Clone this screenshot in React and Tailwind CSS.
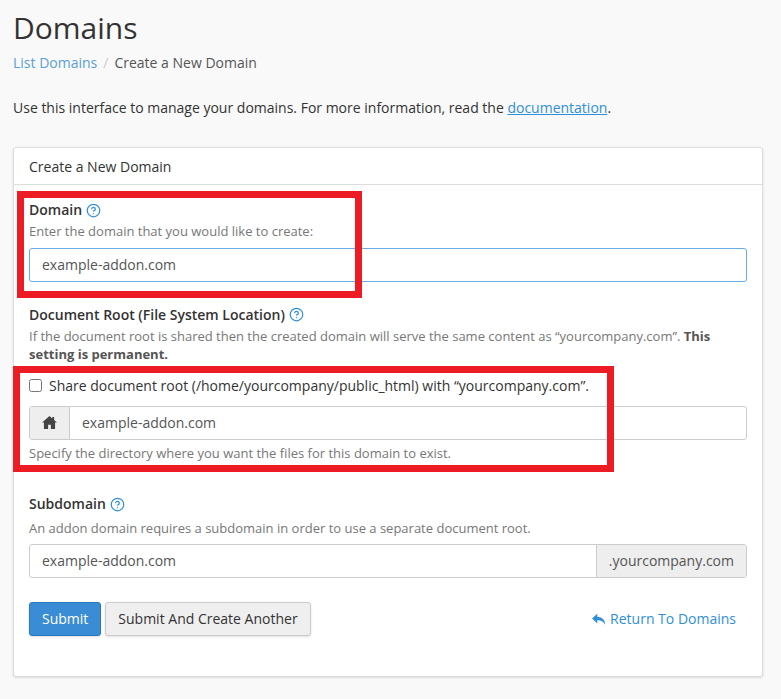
import { HelpCircle } from 'lucide-react';

const font = { fontFamily: '"Open Sans", "Liberation Sans", sans-serif' };

function Help() {
  return <HelpCircle className="inline-block w-[15px] h-[15px] text-[#2f8fd8] ml-1 -mt-0.5" strokeWidth={2} />;
}

function HomeIcon() {
  return (
    <svg viewBox="0 0 16 14" className="w-[15px] h-[13px]" fill="#444">
      <path d="M8 0 0 7h2v7h4.5V9.5h3V14H14V7h2l-3-2.6V1h-2v1.7z" />
    </svg>
  );
}

export default function App() {
  return (
    <div style={font} className="relative min-h-[699px] bg-[#f9f9f9] text-[#333] text-[14px] pl-[13px] pr-[18px] pt-[8px]">
      <h1 className="text-[30px] leading-[40px] text-[#333] font-normal">Domains</h1>
      <div className="mt-[4px] flex items-center text-[14px]">
        <span className="text-[#5a9fd6]">List Domains</span>
        <span className="text-[#ccc] mx-[6px]">/</span>
        <span className="text-[#555]">Create a New Domain</span>
      </div>
      <p className="mt-[24px] text-[14px]">
        Use this interface to manage your domains. For more information, read the{' '}
        <span className="text-[#2f8fd8] underline">documentation</span>.
      </p>
      <div className="mt-[29px] bg-white border border-[#ddd] rounded-[3px] shadow-sm">
        <div className="px-[15px] h-[37px] flex items-center border-b border-[#ddd] text-[14px]">Create a New Domain</div>
        <div className="px-[15px] pt-[14px] pb-[40px]">
          <div className="font-semibold">Domain<Help /></div>
          <div className="text-[13px] text-[#777] mt-[2px]">Enter the domain that you would like to create:</div>
          <div className="mt-[6px] h-[34px] border border-[#66afe9] rounded-[3px] flex items-center px-[12px] text-[#555]">example-addon.com</div>

          <div className="font-semibold mt-[22px]">Document Root (File System Location)<Help /></div>
          <div className="text-[13px] text-[#777] mt-[2px] leading-[18px]">
            If the document root is shared then the created domain will serve the same content as “yourcompany.com”. <b className="text-[#555]">This setting is permanent.</b>
          </div>
          <label className="flex items-center gap-[7px] mt-[12px]">
            <input type="checkbox" className="w-[13px] h-[13px]" />
            <span>Share document root (/home/yourcompany/public_html) with “yourcompany.com”.</span>
          </label>
          <div className="mt-[10px] flex h-[34px] border border-[#ccc] rounded-[3px]">
            <div className="w-[40px] bg-[#eee] border-r border-[#ccc] flex items-center justify-center"><HomeIcon /></div>
            <div className="flex-1 flex items-center px-[12px] text-[#555]">example-addon.com</div>
          </div>
          <div className="text-[13px] text-[#777] mt-[4px]">Specify the directory where you want the files for this domain to exist.</div>

          <div className="font-semibold mt-[30px]">Subdomain<Help /></div>
          <div className="text-[13px] text-[#777] mt-[5px]">An addon domain requires a subdomain in order to use a separate document root.</div>
          <div className="mt-[5px] flex h-[34px] border border-[#ccc] rounded-[3px]">
            <div className="flex-1 flex items-center px-[12px] text-[#555]">example-addon.com</div>
            <div className="bg-[#eee] border-l border-[#ccc] flex items-center px-[12px] text-[#555]">.yourcompany.com</div>
          </div>

          <div className="mt-[24px] flex items-center">
            <button className="h-[34px] px-[12px] bg-[#3a8dd4] border border-[#2a78bb] text-white rounded-[3px] shadow">Submit</button>
            <button className="ml-[4px] h-[34px] px-[12px] bg-[#efefef] border border-[#ccc] text-[#333] rounded-[3px] shadow">Submit And Create Another</button>
            <div className="ml-auto mr-[11px] flex items-center gap-[4px] text-[#2f8fd8]">
              <svg viewBox="0 0 16 16" className="w-[14px] h-[14px]" fill="#2f8fd8"><path d="M6 2 0 7.5 6 13V9.5c4 0 7 1 9 5 0-5-3-8.5-9-9z" /></svg>
              Return To Domains
            </div>
          </div>
        </div>
      </div>
      <div className="absolute left-[17px] top-[191px] w-[345px] h-[107px] border-[7px] border-[#ed1c24] pointer-events-none" />
      <div className="absolute left-[13px] top-[366px] w-[601px] h-[106px] border-[7px] border-[#ed1c24] pointer-events-none" />
    </div>
  );
}
